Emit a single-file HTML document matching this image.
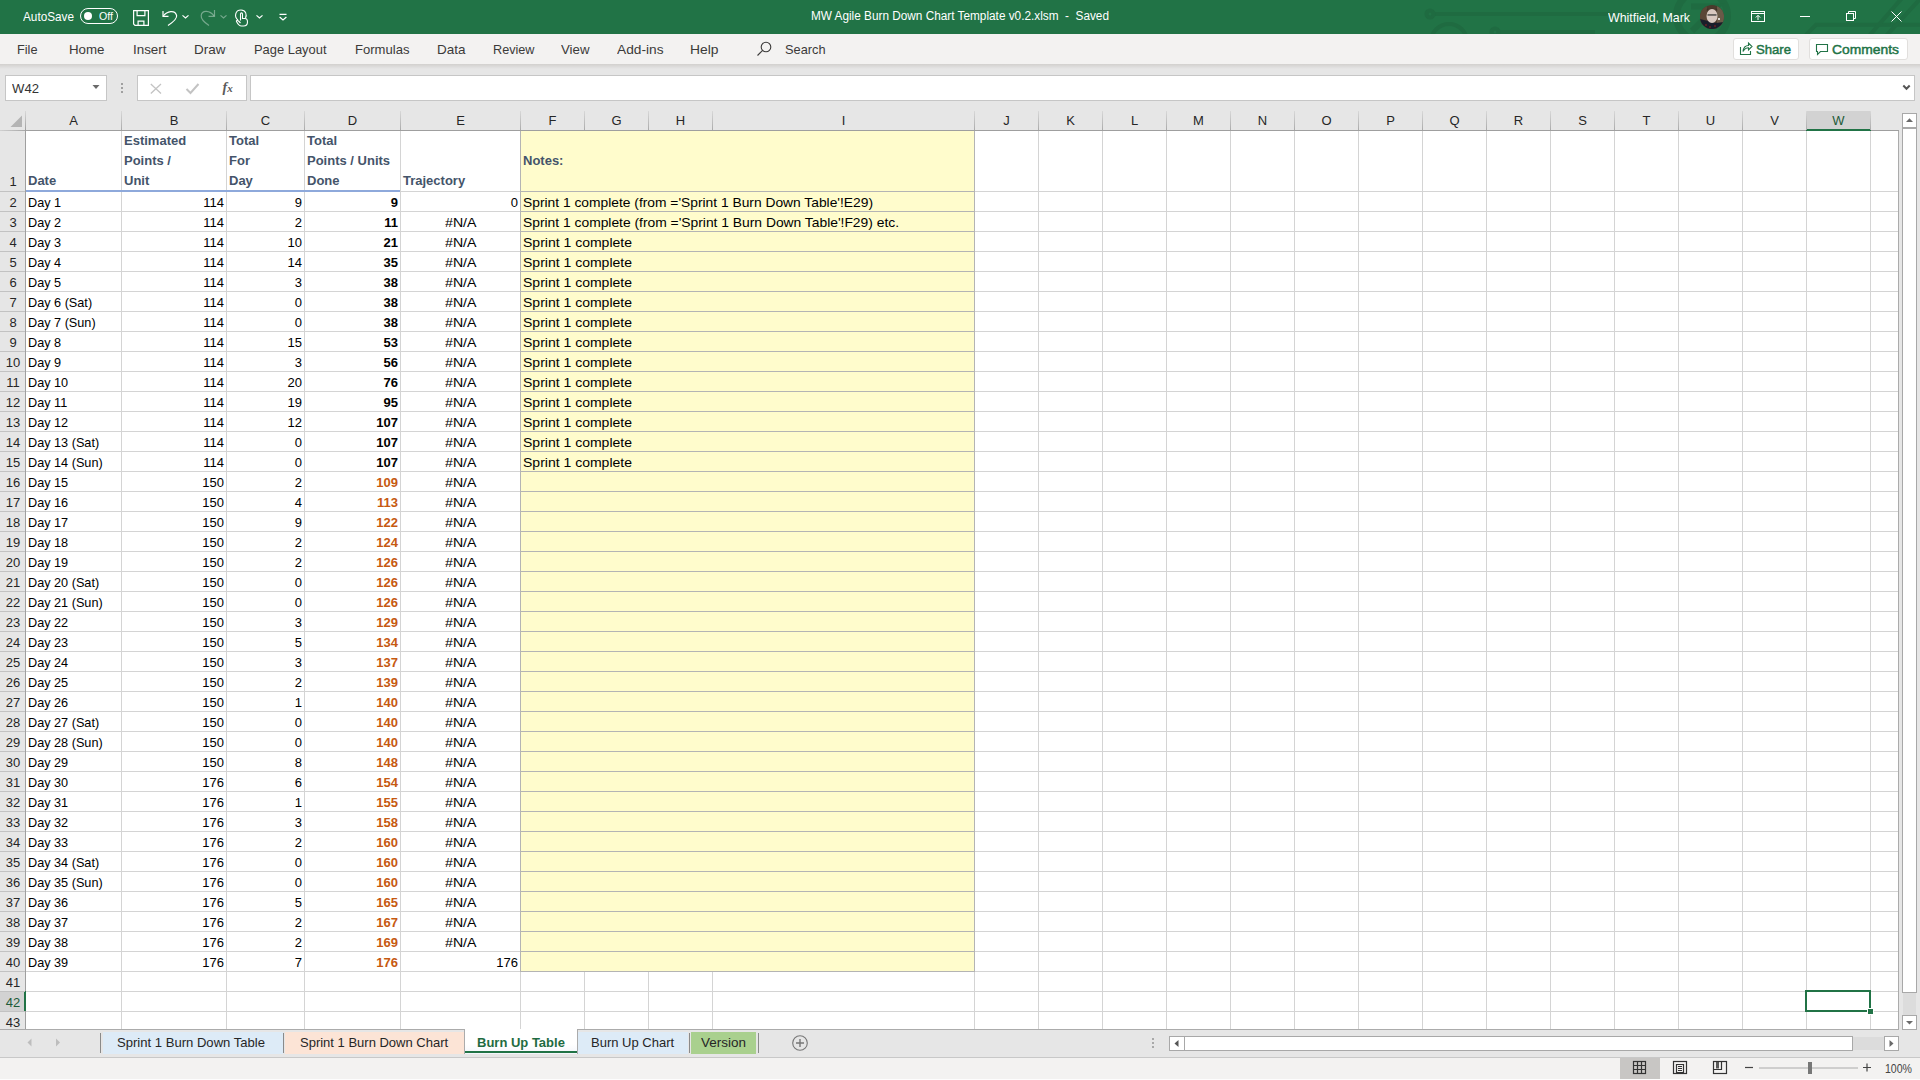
<!DOCTYPE html>
<html><head><meta charset="utf-8"><style>
html,body{margin:0;padding:0;width:1920px;height:1080px;overflow:hidden;background:#fff;position:relative}
body>div,body>svg{position:absolute}
.t{position:absolute;white-space:pre;font-family:'Liberation Sans', sans-serif}
</style></head><body>
<div style="left:0px;top:0px;width:1920px;height:34px;background:#217346"></div>
<svg style="position:absolute;left:1380px;top:0" width="540" height="34" viewBox="0 0 540 34">
<g stroke="#1f6b41" stroke-width="4" fill="none">
<line x1="53" y1="14" x2="235" y2="14"/><circle cx="50" cy="14" r="3.5"/>
<circle cx="69" cy="42" r="18"/>
<line x1="118" y1="32" x2="215" y2="32"/><circle cx="115" cy="32" r="3.5"/>
<circle cx="322" cy="16" r="25.5" stroke-width="7"/>
<path d="M311 6.5 L337 6.5 L312 31" stroke-width="6"/>
<path d="M424 37 L436 24.8 L545 24.8"/>
<path d="M489 36 L522 -2"/>
<path d="M506 36 L541 -2"/>
</g></svg>
<div style="left:80px;top:8px;width:38px;height:16px;border:1.2px solid #fff;border-radius:8px;box-sizing:border-box"></div>
<div style="left:84px;top:12px;width:8px;height:8px;background:#fff;border-radius:50%"></div>
<svg style="position:absolute;left:0;top:0" width="300" height="34" viewBox="0 0 300 34">
<g stroke="#fff" stroke-width="1.2" fill="none">
<path d="M133.6 10.6 H148.4 V25.4 H135 L133.6 24 Z"/>
<path d="M137.1 10.6 V15.6 H144.9 V10.6"/>
<path d="M138.1 25.4 V21.1 H143.9 V25.4"/>
<path d="M163 11 V16.4 H168.5"/>
<path d="M163.3 16 C167 11 175 9.5 176.6 15.5 C177.5 19 172.5 22.5 168 25.6"/>
<path d="M182.5 15.4 L185.5 18 L188.5 15.4"/>
<path d="M256.5 15.4 L259.5 18 L262.5 15.4"/>
<path d="M279.5 14.3 H286.5 M279.6 17 L283 20 L286.4 17"/>
</g>
<g stroke="#fff" stroke-opacity="0.38" stroke-width="1.2" fill="none">
<path d="M214.5 10 V16.4 H208.5"/>
<path d="M214 15.8 C210 10.5 202 9.5 201.2 15.5 C200.8 19 204.5 22.5 209 25.6"/>
<path d="M220.5 15.4 L223.5 18 L226.5 15.4"/>
</g>
<g stroke="#fff" stroke-width="1.1" fill="none">
<path d="M238 20 C234 17 235 10 241 10 C246 10 247 15 245.5 18"/>
<path d="M240.5 20.5 V14 C240.5 12.5 242.5 12.5 242.5 14 V18.5 H245 C247 18.5 247.5 20 247.5 22 C247.5 24.5 246 26 243.5 26 H241.5 C239.5 26 237.5 23.5 236.5 21.5 C236 20.5 237.5 20 238.5 21 L240.5 23"/>
</g>
</svg>
<svg style="position:absolute;left:1700px;top:5px" width="24" height="24" viewBox="0 0 24 24">
<defs><clipPath id="av"><circle cx="12" cy="12" r="12"/></clipPath></defs>
<g clip-path="url(#av)">
<rect width="24" height="24" fill="#4a3a2c"/>
<rect x="0" y="0" width="7" height="24" fill="#5b4636"/>
<rect x="17" y="0" width="7" height="24" fill="#6a5a48"/>
<path d="M0 14 L8 16 L16 18 L24 17 V24 H0 Z" fill="#1a1e2a"/>
<ellipse cx="12" cy="11" rx="5.5" ry="7" fill="#d8c8c0"/>
<path d="M6.5 6 C7 2 17 2 17.5 6 L17 4 C15 3 9 3 7 4 Z" fill="#2a2220"/>
<rect x="7.5" y="9.3" width="9" height="1.3" fill="#3b3b3b"/>
<circle cx="6" cy="20" r="0.7" fill="#c02020"/><circle cx="10" cy="22" r="0.7" fill="#c02020"/><circle cx="15" cy="21" r="0.7" fill="#c02020"/>
<circle cx="19" cy="14" r="1" fill="#fff"/>
</g></svg>
<svg style="position:absolute;left:1740px;top:0" width="180" height="34" viewBox="0 0 180 34">
<g stroke="#fff" stroke-width="1" fill="none">
<rect x="11.5" y="11.5" width="13" height="10"/>
<line x1="11.5" y1="13.5" x2="24.5" y2="13.5"/>
<path d="M18 20 V15.5 M15.8 17.5 L18 15.3 L20.2 17.5"/>
<line x1="60" y1="16.5" x2="70" y2="16.5"/>
<rect x="106.5" y="13.5" width="7" height="7"/>
<path d="M108.5 13.5 V11.5 H115.5 V18.5 H113.5"/>
<path d="M151.5 11.5 L161.5 21.5 M161.5 11.5 L151.5 21.5"/>
</g></svg>
<div style="left:0px;top:34px;width:1920px;height:30px;background:#f3f2f1"></div>
<div style="left:0px;top:64px;width:1920px;height:47px;background:#e6e6e6"></div>
<div style="left:0px;top:64px;width:1920px;height:5px;background:linear-gradient(#d2d0ce,#e6e6e6)"></div>
<svg style="position:absolute;left:750px;top:38px" width="26" height="22" viewBox="0 0 26 22">
<g stroke="#3b3a39" stroke-width="1.1" fill="none"><circle cx="16" cy="9" r="4.8"/><line x1="12.6" y1="12.4" x2="7.5" y2="17.5"/></g></svg>
<div style="left:1733px;top:38px;width:66px;height:22px;background:#fff;border:1px solid #e1dfdd;border-radius:3px;box-sizing:border-box"></div>
<div style="left:1809px;top:38px;width:99px;height:22px;background:#fff;border:1px solid #e1dfdd;border-radius:3px;box-sizing:border-box"></div>
<svg style="position:absolute;left:1735px;top:38px" width="180" height="22" viewBox="0 0 180 22">
<g stroke="#217346" stroke-width="1.1" fill="none">
<path d="M5.5 9 V16.5 H15.5 V13"/>
<path d="M8 13.5 C8.5 9.5 10.5 7.5 13.5 7.5 V5 L17 8.5 L13.5 12 V9.8 C11 9.8 9.5 11 8 13.5 Z"/>
<path d="M81.5 6.5 H92.5 V13.5 H85.5 L82.5 16.5 V13.5 H81.5 Z"/>
</g></svg>
<div style="left:5px;top:75px;width:102px;height:26px;background:#fff;border:1px solid #c6c6c6;box-sizing:border-box"></div>
<div style="left:137px;top:75px;width:110px;height:26px;background:#fff;border:1px solid #c6c6c6;box-sizing:border-box"></div>
<svg style="position:absolute;left:0;top:68px" width="260" height="36" viewBox="0 0 260 36">
<path d="M92.5 17 H99.5 L96 21 Z" fill="#6a6a6a"/>
<g fill="#a0a0a0"><rect x="121" y="15" width="2" height="2"/><rect x="121" y="19" width="2" height="2"/><rect x="121" y="23" width="2" height="2"/></g>
<g stroke="#c3c3c3" stroke-width="1.3" fill="none">
<path d="M150.8 16 L161 25.5 M161 16 L150.8 25.5"/>
<path d="M186.5 21 L190.5 25 L198.5 16" stroke-width="2"/>
</g>
</svg>
<div style="position:absolute;left:222.5px;top:80px;font:italic bold 14px 'Liberation Serif',serif;color:#5a5a5a">f<span style="font-size:11px">x</span></div>
<div style="left:250px;top:75px;width:1665px;height:26px;background:#fff;border:1px solid #c6c6c6;box-sizing:border-box"></div>
<svg style="position:absolute;left:1898px;top:80px" width="16" height="16" viewBox="0 0 16 16">
<path d="M5.3 5.5 L8.5 8.8 L11.7 5.5" stroke="#555" stroke-width="2" fill="none"/></svg>
<div style="left:0px;top:111px;width:1900px;height:20px;background:#e6e6e6"></div>
<div style="left:0px;top:130px;width:1899px;height:1px;background:linear-gradient(90deg,#d0d0d0,#9f9f9f 30px)"></div>
<svg style="position:absolute;left:0;top:111px" width="26" height="20" viewBox="0 0 26 20">
<path d="M10.5 16 H22 V4.5 Z" fill="#b4b4b4"/></svg>
<div style="left:1806px;top:111px;width:65px;height:20px;background:#d2d2d2"></div>
<div style="left:1806px;top:129px;width:65px;height:2px;background:#217346"></div>
<div style="left:1870px;top:111px;width:1px;height:18px;background:#acacac"></div>
<div style="left:121px;top:111px;width:1px;height:19px;background:linear-gradient(#d8d8d8,#ababab)"></div>
<div style="left:226px;top:111px;width:1px;height:19px;background:linear-gradient(#d8d8d8,#ababab)"></div>
<div style="left:304px;top:111px;width:1px;height:19px;background:linear-gradient(#d8d8d8,#ababab)"></div>
<div style="left:400px;top:111px;width:1px;height:19px;background:linear-gradient(#d8d8d8,#ababab)"></div>
<div style="left:520px;top:111px;width:1px;height:19px;background:linear-gradient(#d8d8d8,#ababab)"></div>
<div style="left:584px;top:111px;width:1px;height:19px;background:linear-gradient(#d8d8d8,#ababab)"></div>
<div style="left:648px;top:111px;width:1px;height:19px;background:linear-gradient(#d8d8d8,#ababab)"></div>
<div style="left:712px;top:111px;width:1px;height:19px;background:linear-gradient(#d8d8d8,#ababab)"></div>
<div style="left:974px;top:111px;width:1px;height:19px;background:linear-gradient(#d8d8d8,#ababab)"></div>
<div style="left:1038px;top:111px;width:1px;height:19px;background:linear-gradient(#d8d8d8,#ababab)"></div>
<div style="left:1102px;top:111px;width:1px;height:19px;background:linear-gradient(#d8d8d8,#ababab)"></div>
<div style="left:1166px;top:111px;width:1px;height:19px;background:linear-gradient(#d8d8d8,#ababab)"></div>
<div style="left:1230px;top:111px;width:1px;height:19px;background:linear-gradient(#d8d8d8,#ababab)"></div>
<div style="left:1294px;top:111px;width:1px;height:19px;background:linear-gradient(#d8d8d8,#ababab)"></div>
<div style="left:1358px;top:111px;width:1px;height:19px;background:linear-gradient(#d8d8d8,#ababab)"></div>
<div style="left:1422px;top:111px;width:1px;height:19px;background:linear-gradient(#d8d8d8,#ababab)"></div>
<div style="left:1486px;top:111px;width:1px;height:19px;background:linear-gradient(#d8d8d8,#ababab)"></div>
<div style="left:1550px;top:111px;width:1px;height:19px;background:linear-gradient(#d8d8d8,#ababab)"></div>
<div style="left:1614px;top:111px;width:1px;height:19px;background:linear-gradient(#d8d8d8,#ababab)"></div>
<div style="left:1678px;top:111px;width:1px;height:19px;background:linear-gradient(#d8d8d8,#ababab)"></div>
<div style="left:1742px;top:111px;width:1px;height:19px;background:linear-gradient(#d8d8d8,#ababab)"></div>
<div style="left:1806px;top:111px;width:1px;height:19px;background:linear-gradient(#d8d8d8,#ababab)"></div>
<div style="left:1870px;top:111px;width:1px;height:19px;background:linear-gradient(#d8d8d8,#ababab)"></div>
<div style="left:0px;top:131px;width:26px;height:898px;background:#e6e6e6"></div>
<div style="left:25px;top:111px;width:1px;height:918px;background:linear-gradient(#d8d8d8,#9f9f9f 19px)"></div>
<div style="left:0px;top:991px;width:25px;height:20px;background:#d2d2d2"></div>
<div style="left:24px;top:991px;width:2px;height:20px;background:#217346"></div>
<div style="left:0px;top:191px;width:25px;height:1px;background:#c2c2c2"></div>
<div style="left:0px;top:211px;width:25px;height:1px;background:#c2c2c2"></div>
<div style="left:0px;top:231px;width:25px;height:1px;background:#c2c2c2"></div>
<div style="left:0px;top:251px;width:25px;height:1px;background:#c2c2c2"></div>
<div style="left:0px;top:271px;width:25px;height:1px;background:#c2c2c2"></div>
<div style="left:0px;top:291px;width:25px;height:1px;background:#c2c2c2"></div>
<div style="left:0px;top:311px;width:25px;height:1px;background:#c2c2c2"></div>
<div style="left:0px;top:331px;width:25px;height:1px;background:#c2c2c2"></div>
<div style="left:0px;top:351px;width:25px;height:1px;background:#c2c2c2"></div>
<div style="left:0px;top:371px;width:25px;height:1px;background:#c2c2c2"></div>
<div style="left:0px;top:391px;width:25px;height:1px;background:#c2c2c2"></div>
<div style="left:0px;top:411px;width:25px;height:1px;background:#c2c2c2"></div>
<div style="left:0px;top:431px;width:25px;height:1px;background:#c2c2c2"></div>
<div style="left:0px;top:451px;width:25px;height:1px;background:#c2c2c2"></div>
<div style="left:0px;top:471px;width:25px;height:1px;background:#c2c2c2"></div>
<div style="left:0px;top:491px;width:25px;height:1px;background:#c2c2c2"></div>
<div style="left:0px;top:511px;width:25px;height:1px;background:#c2c2c2"></div>
<div style="left:0px;top:531px;width:25px;height:1px;background:#c2c2c2"></div>
<div style="left:0px;top:551px;width:25px;height:1px;background:#c2c2c2"></div>
<div style="left:0px;top:571px;width:25px;height:1px;background:#c2c2c2"></div>
<div style="left:0px;top:591px;width:25px;height:1px;background:#c2c2c2"></div>
<div style="left:0px;top:611px;width:25px;height:1px;background:#c2c2c2"></div>
<div style="left:0px;top:631px;width:25px;height:1px;background:#c2c2c2"></div>
<div style="left:0px;top:651px;width:25px;height:1px;background:#c2c2c2"></div>
<div style="left:0px;top:671px;width:25px;height:1px;background:#c2c2c2"></div>
<div style="left:0px;top:691px;width:25px;height:1px;background:#c2c2c2"></div>
<div style="left:0px;top:711px;width:25px;height:1px;background:#c2c2c2"></div>
<div style="left:0px;top:731px;width:25px;height:1px;background:#c2c2c2"></div>
<div style="left:0px;top:751px;width:25px;height:1px;background:#c2c2c2"></div>
<div style="left:0px;top:771px;width:25px;height:1px;background:#c2c2c2"></div>
<div style="left:0px;top:791px;width:25px;height:1px;background:#c2c2c2"></div>
<div style="left:0px;top:811px;width:25px;height:1px;background:#c2c2c2"></div>
<div style="left:0px;top:831px;width:25px;height:1px;background:#c2c2c2"></div>
<div style="left:0px;top:851px;width:25px;height:1px;background:#c2c2c2"></div>
<div style="left:0px;top:871px;width:25px;height:1px;background:#c2c2c2"></div>
<div style="left:0px;top:891px;width:25px;height:1px;background:#c2c2c2"></div>
<div style="left:0px;top:911px;width:25px;height:1px;background:#c2c2c2"></div>
<div style="left:0px;top:931px;width:25px;height:1px;background:#c2c2c2"></div>
<div style="left:0px;top:951px;width:25px;height:1px;background:#c2c2c2"></div>
<div style="left:0px;top:971px;width:25px;height:1px;background:#c2c2c2"></div>
<div style="left:0px;top:991px;width:25px;height:1px;background:#c2c2c2"></div>
<div style="left:0px;top:1011px;width:25px;height:1px;background:#c2c2c2"></div>
<div style="left:0px;top:1031px;width:25px;height:1px;background:#c2c2c2"></div>
<div style="left:26px;top:131px;width:1873px;height:898px;background:#fff"></div>
<div style="left:121px;top:131px;width:1px;height:898px;background:#d4d4d4"></div>
<div style="left:226px;top:131px;width:1px;height:898px;background:#d4d4d4"></div>
<div style="left:304px;top:131px;width:1px;height:898px;background:#d4d4d4"></div>
<div style="left:400px;top:131px;width:1px;height:898px;background:#d4d4d4"></div>
<div style="left:520px;top:131px;width:1px;height:898px;background:#d4d4d4"></div>
<div style="left:584px;top:131px;width:1px;height:898px;background:#d4d4d4"></div>
<div style="left:648px;top:131px;width:1px;height:898px;background:#d4d4d4"></div>
<div style="left:712px;top:131px;width:1px;height:898px;background:#d4d4d4"></div>
<div style="left:974px;top:131px;width:1px;height:898px;background:#d4d4d4"></div>
<div style="left:1038px;top:131px;width:1px;height:898px;background:#d4d4d4"></div>
<div style="left:1102px;top:131px;width:1px;height:898px;background:#d4d4d4"></div>
<div style="left:1166px;top:131px;width:1px;height:898px;background:#d4d4d4"></div>
<div style="left:1230px;top:131px;width:1px;height:898px;background:#d4d4d4"></div>
<div style="left:1294px;top:131px;width:1px;height:898px;background:#d4d4d4"></div>
<div style="left:1358px;top:131px;width:1px;height:898px;background:#d4d4d4"></div>
<div style="left:1422px;top:131px;width:1px;height:898px;background:#d4d4d4"></div>
<div style="left:1486px;top:131px;width:1px;height:898px;background:#d4d4d4"></div>
<div style="left:1550px;top:131px;width:1px;height:898px;background:#d4d4d4"></div>
<div style="left:1614px;top:131px;width:1px;height:898px;background:#d4d4d4"></div>
<div style="left:1678px;top:131px;width:1px;height:898px;background:#d4d4d4"></div>
<div style="left:1742px;top:131px;width:1px;height:898px;background:#d4d4d4"></div>
<div style="left:1806px;top:131px;width:1px;height:898px;background:#d4d4d4"></div>
<div style="left:1870px;top:131px;width:1px;height:898px;background:#d4d4d4"></div>
<div style="left:26px;top:191px;width:1873px;height:1px;background:#d4d4d4"></div>
<div style="left:26px;top:211px;width:1873px;height:1px;background:#d4d4d4"></div>
<div style="left:26px;top:231px;width:1873px;height:1px;background:#d4d4d4"></div>
<div style="left:26px;top:251px;width:1873px;height:1px;background:#d4d4d4"></div>
<div style="left:26px;top:271px;width:1873px;height:1px;background:#d4d4d4"></div>
<div style="left:26px;top:291px;width:1873px;height:1px;background:#d4d4d4"></div>
<div style="left:26px;top:311px;width:1873px;height:1px;background:#d4d4d4"></div>
<div style="left:26px;top:331px;width:1873px;height:1px;background:#d4d4d4"></div>
<div style="left:26px;top:351px;width:1873px;height:1px;background:#d4d4d4"></div>
<div style="left:26px;top:371px;width:1873px;height:1px;background:#d4d4d4"></div>
<div style="left:26px;top:391px;width:1873px;height:1px;background:#d4d4d4"></div>
<div style="left:26px;top:411px;width:1873px;height:1px;background:#d4d4d4"></div>
<div style="left:26px;top:431px;width:1873px;height:1px;background:#d4d4d4"></div>
<div style="left:26px;top:451px;width:1873px;height:1px;background:#d4d4d4"></div>
<div style="left:26px;top:471px;width:1873px;height:1px;background:#d4d4d4"></div>
<div style="left:26px;top:491px;width:1873px;height:1px;background:#d4d4d4"></div>
<div style="left:26px;top:511px;width:1873px;height:1px;background:#d4d4d4"></div>
<div style="left:26px;top:531px;width:1873px;height:1px;background:#d4d4d4"></div>
<div style="left:26px;top:551px;width:1873px;height:1px;background:#d4d4d4"></div>
<div style="left:26px;top:571px;width:1873px;height:1px;background:#d4d4d4"></div>
<div style="left:26px;top:591px;width:1873px;height:1px;background:#d4d4d4"></div>
<div style="left:26px;top:611px;width:1873px;height:1px;background:#d4d4d4"></div>
<div style="left:26px;top:631px;width:1873px;height:1px;background:#d4d4d4"></div>
<div style="left:26px;top:651px;width:1873px;height:1px;background:#d4d4d4"></div>
<div style="left:26px;top:671px;width:1873px;height:1px;background:#d4d4d4"></div>
<div style="left:26px;top:691px;width:1873px;height:1px;background:#d4d4d4"></div>
<div style="left:26px;top:711px;width:1873px;height:1px;background:#d4d4d4"></div>
<div style="left:26px;top:731px;width:1873px;height:1px;background:#d4d4d4"></div>
<div style="left:26px;top:751px;width:1873px;height:1px;background:#d4d4d4"></div>
<div style="left:26px;top:771px;width:1873px;height:1px;background:#d4d4d4"></div>
<div style="left:26px;top:791px;width:1873px;height:1px;background:#d4d4d4"></div>
<div style="left:26px;top:811px;width:1873px;height:1px;background:#d4d4d4"></div>
<div style="left:26px;top:831px;width:1873px;height:1px;background:#d4d4d4"></div>
<div style="left:26px;top:851px;width:1873px;height:1px;background:#d4d4d4"></div>
<div style="left:26px;top:871px;width:1873px;height:1px;background:#d4d4d4"></div>
<div style="left:26px;top:891px;width:1873px;height:1px;background:#d4d4d4"></div>
<div style="left:26px;top:911px;width:1873px;height:1px;background:#d4d4d4"></div>
<div style="left:26px;top:931px;width:1873px;height:1px;background:#d4d4d4"></div>
<div style="left:26px;top:951px;width:1873px;height:1px;background:#d4d4d4"></div>
<div style="left:26px;top:971px;width:1873px;height:1px;background:#d4d4d4"></div>
<div style="left:26px;top:991px;width:1873px;height:1px;background:#d4d4d4"></div>
<div style="left:26px;top:1011px;width:1873px;height:1px;background:#d4d4d4"></div>
<div style="left:26px;top:190px;width:374px;height:2px;background:#8ea9db"></div>
<div style="left:520px;top:131px;width:455px;height:841px;background:#fffccc;border-left:1px solid #b4b4b4;border-right:1px solid #b4b4b4;border-bottom:1px solid #b4b4b4;box-sizing:border-box"></div>
<div style="left:520px;top:191px;width:455px;height:1px;background:#b4b4b4"></div>
<div style="left:520px;top:211px;width:455px;height:1px;background:#b4b4b4"></div>
<div style="left:520px;top:231px;width:455px;height:1px;background:#b4b4b4"></div>
<div style="left:520px;top:251px;width:455px;height:1px;background:#b4b4b4"></div>
<div style="left:520px;top:271px;width:455px;height:1px;background:#b4b4b4"></div>
<div style="left:520px;top:291px;width:455px;height:1px;background:#b4b4b4"></div>
<div style="left:520px;top:311px;width:455px;height:1px;background:#b4b4b4"></div>
<div style="left:520px;top:331px;width:455px;height:1px;background:#b4b4b4"></div>
<div style="left:520px;top:351px;width:455px;height:1px;background:#b4b4b4"></div>
<div style="left:520px;top:371px;width:455px;height:1px;background:#b4b4b4"></div>
<div style="left:520px;top:391px;width:455px;height:1px;background:#b4b4b4"></div>
<div style="left:520px;top:411px;width:455px;height:1px;background:#b4b4b4"></div>
<div style="left:520px;top:431px;width:455px;height:1px;background:#b4b4b4"></div>
<div style="left:520px;top:451px;width:455px;height:1px;background:#b4b4b4"></div>
<div style="left:520px;top:471px;width:455px;height:1px;background:#b4b4b4"></div>
<div style="left:520px;top:491px;width:455px;height:1px;background:#b4b4b4"></div>
<div style="left:520px;top:511px;width:455px;height:1px;background:#b4b4b4"></div>
<div style="left:520px;top:531px;width:455px;height:1px;background:#b4b4b4"></div>
<div style="left:520px;top:551px;width:455px;height:1px;background:#b4b4b4"></div>
<div style="left:520px;top:571px;width:455px;height:1px;background:#b4b4b4"></div>
<div style="left:520px;top:591px;width:455px;height:1px;background:#b4b4b4"></div>
<div style="left:520px;top:611px;width:455px;height:1px;background:#b4b4b4"></div>
<div style="left:520px;top:631px;width:455px;height:1px;background:#b4b4b4"></div>
<div style="left:520px;top:651px;width:455px;height:1px;background:#b4b4b4"></div>
<div style="left:520px;top:671px;width:455px;height:1px;background:#b4b4b4"></div>
<div style="left:520px;top:691px;width:455px;height:1px;background:#b4b4b4"></div>
<div style="left:520px;top:711px;width:455px;height:1px;background:#b4b4b4"></div>
<div style="left:520px;top:731px;width:455px;height:1px;background:#b4b4b4"></div>
<div style="left:520px;top:751px;width:455px;height:1px;background:#b4b4b4"></div>
<div style="left:520px;top:771px;width:455px;height:1px;background:#b4b4b4"></div>
<div style="left:520px;top:791px;width:455px;height:1px;background:#b4b4b4"></div>
<div style="left:520px;top:811px;width:455px;height:1px;background:#b4b4b4"></div>
<div style="left:520px;top:831px;width:455px;height:1px;background:#b4b4b4"></div>
<div style="left:520px;top:851px;width:455px;height:1px;background:#b4b4b4"></div>
<div style="left:520px;top:871px;width:455px;height:1px;background:#b4b4b4"></div>
<div style="left:520px;top:891px;width:455px;height:1px;background:#b4b4b4"></div>
<div style="left:520px;top:911px;width:455px;height:1px;background:#b4b4b4"></div>
<div style="left:520px;top:931px;width:455px;height:1px;background:#b4b4b4"></div>
<div style="left:520px;top:951px;width:455px;height:1px;background:#b4b4b4"></div>
<div style="left:1805px;top:990px;width:66px;height:22px;border:2px solid #217346;box-sizing:border-box"></div>
<div style="left:1867px;top:1008px;width:5px;height:5px;background:#217346;border:1px solid #fff"></div>
<div style="left:1899px;top:111px;width:21px;height:919px;background:#e6e6e6"></div>
<div style="left:1898px;top:131px;width:1px;height:899px;background:#ababab"></div>
<div style="left:1902px;top:113px;width:15px;height:15px;background:#fff;border:1px solid #a8a8a8;box-sizing:border-box"></div>
<div style="left:1902px;top:128px;width:15px;height:865px;background:#fff;border:1px solid #a8a8a8;box-sizing:border-box"></div>
<div style="left:1903px;top:993px;width:13px;height:22px;background:#dcdcdc"></div>
<div style="left:1902px;top:1015px;width:15px;height:15px;background:#fff;border:1px solid #a8a8a8;box-sizing:border-box"></div>
<svg style="position:absolute;left:1902px;top:113px" width="15" height="917" viewBox="0 0 15 917">
<path d="M4 9 L7.5 5.3 L11 9 Z" fill="#6a6a6a"/><path d="M4 908 L7.5 911.5 L11 908 Z" fill="#6a6a6a"/></svg>
<div style="left:0px;top:1030px;width:1920px;height:28px;background:#e6e6e6"></div>
<div style="left:0px;top:1029px;width:1899px;height:1px;background:#ababab"></div>
<div style="left:0px;top:1057px;width:1920px;height:1px;background:#c8c8c8"></div>
<svg style="position:absolute;left:0;top:1030px" width="100" height="28" viewBox="0 0 100 28">
<path d="M27 8.5 L31 12.5 L27 16.5 Z" fill="#bdbdbd" transform="translate(29,0)"/>
<path d="M31.5 8.5 L27.5 12.5 L31.5 16.5 Z" fill="#bdbdbd"/></svg>
<div style="left:100px;top:1033px;width:1px;height:20px;background:#8a8a8a"></div>
<div style="left:103px;top:1032px;width:180px;height:22px;background:#ddebf7"></div>
<div style="left:283px;top:1033px;width:1px;height:20px;background:#8a8a8a"></div>
<div style="left:285px;top:1032px;width:179px;height:22px;background:#fce4d6"></div>
<div style="left:464px;top:1029px;width:114px;height:25px;background:linear-gradient(#fff 60%,#f3f6fb);border-left:1px solid #ababab;border-right:1px solid #ababab;box-sizing:border-box"></div>
<div style="left:465px;top:1051px;width:112px;height:2px;background:#217346"></div>
<div style="left:578px;top:1032px;width:110px;height:22px;background:#ddebf7"></div>
<div style="left:689px;top:1033px;width:1px;height:20px;background:#8a8a8a"></div>
<div style="left:691px;top:1032px;width:65px;height:22px;background:#a9d08e"></div>
<div style="left:758px;top:1033px;width:1px;height:20px;background:#8a8a8a"></div>
<svg style="position:absolute;left:790px;top:1034px" width="20" height="20" viewBox="0 0 20 20">
<circle cx="10" cy="9" r="7.3" stroke="#777" stroke-width="1.1" fill="none"/><path d="M10 5 V13 M6 9 H14" stroke="#777" stroke-width="1.4"/></svg>
<svg style="position:absolute;left:1148px;top:1030px" width="10" height="28" viewBox="0 0 10 28">
<g fill="#a8a8a8"><rect x="4" y="8" width="2" height="2"/><rect x="4" y="12" width="2" height="2"/><rect x="4" y="16" width="2" height="2"/></g></svg>
<div style="left:1169px;top:1036px;width:16px;height:15px;background:#fff;border:1px solid #a8a8a8;box-sizing:border-box"></div>
<div style="left:1184px;top:1036px;width:669px;height:15px;background:#fff;border:1px solid #a8a8a8;box-sizing:border-box"></div>
<div style="left:1853px;top:1037px;width:31px;height:13px;background:#dcdcdc"></div>
<div style="left:1884px;top:1036px;width:15px;height:15px;background:#fff;border:1px solid #a8a8a8;box-sizing:border-box"></div>
<svg style="position:absolute;left:1169px;top:1036px" width="731" height="15" viewBox="0 0 731 15">
<path d="M9.5 4 L5.5 7.5 L9.5 11 Z" fill="#555"/><path d="M720.5 4 L724.5 7.5 L720.5 11 Z" fill="#6a6a6a"/></svg>
<div style="left:0px;top:1058px;width:1920px;height:22px;background:#f3f2f1"></div>
<div style="left:0px;top:1079px;width:1920px;height:1px;background:#fdfdfd"></div>
<div style="left:1620px;top:1058px;width:40px;height:21px;background:#c8c6c4"></div>
<svg style="position:absolute;left:1620px;top:1058px" width="300" height="22" viewBox="0 0 300 22">
<g stroke="#333" stroke-width="1.2" fill="none">
<rect x="13.5" y="3.5" width="12" height="12"/><path d="M17.5 3.5 V15.5 M21.5 3.5 V15.5 M13.5 7.5 H25.5 M13.5 11.5 H25.5"/>
<rect x="53.5" y="3.5" width="13" height="12"/><path d="M56.5 6.5 H63.5 V14.5 H56.5 Z M58 8.5 H62 M58 10.5 H62 M58 12.5 H62"/>
<rect x="93.5" y="3.5" width="13" height="12"/><path d="M96.8 3.5 V10.5 M98.2 3.5 V10.5 M101.5 3.5 V11.5 H93.5"/>
</g>
<path d="M125 9.5 H133" stroke="#444" stroke-width="1.2"/>
<path d="M139 10 H238" stroke="#aaa" stroke-width="1"/>
<rect x="188" y="4" width="4" height="12" fill="#777"/>
<path d="M243 9.5 H251 M247 5.5 V13.5" stroke="#444" stroke-width="1.2"/>
</svg>
<div class="t" style="left:23.00px;top:9px;font-size:13px;line-height:16px;color:#fff;font-weight:normal;transform:scaleX(0.9047);transform-origin:0 0;">AutoSave</div>
<div class="t" style="left:98.50px;top:10px;font-size:11px;line-height:13px;color:#fff;font-weight:normal;transform:scaleX(0.9666);transform-origin:0 0;">Off</div>
<div class="t" style="left:811.00px;top:9px;font-size:12.5px;line-height:15px;color:#fff;font-weight:normal;transform:scaleX(0.9434);transform-origin:0 0;">MW Agile Burn Down Chart Template v0.2.xlsm  -  Saved</div>
<div class="t" style="left:1608.00px;top:10px;font-size:13px;line-height:16px;color:#fff;font-weight:normal;transform:scaleX(0.9538);transform-origin:0 0;">Whitfield, Mark</div>
<div class="t" style="left:17.00px;top:42px;font-size:13px;line-height:16px;color:#3b3a39;font-weight:normal;transform:scaleX(0.9784);transform-origin:0 0;">File</div>
<div class="t" style="left:69.00px;top:42px;font-size:13px;line-height:16px;color:#3b3a39;font-weight:normal;transform:scaleX(1.0234);transform-origin:0 0;">Home</div>
<div class="t" style="left:133.00px;top:42px;font-size:13px;line-height:16px;color:#3b3a39;font-weight:normal;transform:scaleX(1.0303);transform-origin:0 0;">Insert</div>
<div class="t" style="left:194.00px;top:42px;font-size:13px;line-height:16px;color:#3b3a39;font-weight:normal;transform:scaleX(1.0381);transform-origin:0 0;">Draw</div>
<div class="t" style="left:254.00px;top:42px;font-size:13px;line-height:16px;color:#3b3a39;font-weight:normal;transform:scaleX(0.9929);transform-origin:0 0;">Page Layout</div>
<div class="t" style="left:355.00px;top:42px;font-size:13px;line-height:16px;color:#3b3a39;font-weight:normal;transform:scaleX(1.0058);transform-origin:0 0;">Formulas</div>
<div class="t" style="left:437.00px;top:42px;font-size:13px;line-height:16px;color:#3b3a39;font-weight:normal;transform:scaleX(1.0375);transform-origin:0 0;">Data</div>
<div class="t" style="left:493.00px;top:42px;font-size:13px;line-height:16px;color:#3b3a39;font-weight:normal;transform:scaleX(0.9736);transform-origin:0 0;">Review</div>
<div class="t" style="left:561.00px;top:42px;font-size:13px;line-height:16px;color:#3b3a39;font-weight:normal;transform:scaleX(1.0196);transform-origin:0 0;">View</div>
<div class="t" style="left:617.00px;top:42px;font-size:13px;line-height:16px;color:#3b3a39;font-weight:normal;transform:scaleX(1.0549);transform-origin:0 0;">Add-ins</div>
<div class="t" style="left:690.00px;top:42px;font-size:13px;line-height:16px;color:#3b3a39;font-weight:normal;transform:scaleX(1.0654);transform-origin:0 0;">Help</div>
<div class="t" style="left:785.00px;top:42px;font-size:13px;line-height:16px;color:#3b3a39;font-weight:normal;transform:scaleX(0.9829);transform-origin:0 0;">Search</div>
<div class="t" style="left:1756.00px;top:42px;font-size:13px;line-height:16px;color:#217346;font-weight:normal;transform:scaleX(1.0086);transform-origin:0 0;-webkit-text-stroke:0.45px #217346;">Share</div>
<div class="t" style="left:1832.00px;top:42px;font-size:13px;line-height:16px;color:#217346;font-weight:normal;transform:scaleX(1.0659);transform-origin:0 0;-webkit-text-stroke:0.45px #217346;">Comments</div>
<div class="t" style="left:12.00px;top:81px;font-size:13px;line-height:16px;color:#333;font-weight:normal;transform:scaleX(1.0099);transform-origin:0 0;">W42</div>
<div class="t" style="left:69.16px;top:113px;font-size:13px;line-height:16px;color:#262626;font-weight:normal;">A</div>
<div class="t" style="left:169.66px;top:113px;font-size:13px;line-height:16px;color:#262626;font-weight:normal;">B</div>
<div class="t" style="left:260.80px;top:113px;font-size:13px;line-height:16px;color:#262626;font-weight:normal;">C</div>
<div class="t" style="left:347.80px;top:113px;font-size:13px;line-height:16px;color:#262626;font-weight:normal;">D</div>
<div class="t" style="left:456.16px;top:113px;font-size:13px;line-height:16px;color:#262626;font-weight:normal;">E</div>
<div class="t" style="left:548.52px;top:113px;font-size:13px;line-height:16px;color:#262626;font-weight:normal;">F</div>
<div class="t" style="left:611.44px;top:113px;font-size:13px;line-height:16px;color:#262626;font-weight:normal;">G</div>
<div class="t" style="left:675.80px;top:113px;font-size:13px;line-height:16px;color:#262626;font-weight:normal;">H</div>
<div class="t" style="left:841.69px;top:113px;font-size:13px;line-height:16px;color:#262626;font-weight:normal;">I</div>
<div class="t" style="left:1003.25px;top:113px;font-size:13px;line-height:16px;color:#262626;font-weight:normal;">J</div>
<div class="t" style="left:1066.16px;top:113px;font-size:13px;line-height:16px;color:#262626;font-weight:normal;">K</div>
<div class="t" style="left:1130.88px;top:113px;font-size:13px;line-height:16px;color:#262626;font-weight:normal;">L</div>
<div class="t" style="left:1193.08px;top:113px;font-size:13px;line-height:16px;color:#262626;font-weight:normal;">M</div>
<div class="t" style="left:1257.80px;top:113px;font-size:13px;line-height:16px;color:#262626;font-weight:normal;">N</div>
<div class="t" style="left:1321.44px;top:113px;font-size:13px;line-height:16px;color:#262626;font-weight:normal;">O</div>
<div class="t" style="left:1386.16px;top:113px;font-size:13px;line-height:16px;color:#262626;font-weight:normal;">P</div>
<div class="t" style="left:1449.44px;top:113px;font-size:13px;line-height:16px;color:#262626;font-weight:normal;">Q</div>
<div class="t" style="left:1513.80px;top:113px;font-size:13px;line-height:16px;color:#262626;font-weight:normal;">R</div>
<div class="t" style="left:1578.16px;top:113px;font-size:13px;line-height:16px;color:#262626;font-weight:normal;">S</div>
<div class="t" style="left:1642.52px;top:113px;font-size:13px;line-height:16px;color:#262626;font-weight:normal;">T</div>
<div class="t" style="left:1705.80px;top:113px;font-size:13px;line-height:16px;color:#262626;font-weight:normal;">U</div>
<div class="t" style="left:1770.16px;top:113px;font-size:13px;line-height:16px;color:#262626;font-weight:normal;">V</div>
<div class="t" style="left:1832.36px;top:113px;font-size:13px;line-height:16px;color:#1e5b38;font-weight:normal;">W</div>
<div class="t" style="left:9.38px;top:174px;font-size:13px;line-height:16px;color:#262626;font-weight:normal;">1</div>
<div class="t" style="left:9.38px;top:195px;font-size:13px;line-height:16px;color:#262626;font-weight:normal;">2</div>
<div class="t" style="left:9.38px;top:215px;font-size:13px;line-height:16px;color:#262626;font-weight:normal;">3</div>
<div class="t" style="left:9.38px;top:235px;font-size:13px;line-height:16px;color:#262626;font-weight:normal;">4</div>
<div class="t" style="left:9.38px;top:255px;font-size:13px;line-height:16px;color:#262626;font-weight:normal;">5</div>
<div class="t" style="left:9.38px;top:275px;font-size:13px;line-height:16px;color:#262626;font-weight:normal;">6</div>
<div class="t" style="left:9.38px;top:295px;font-size:13px;line-height:16px;color:#262626;font-weight:normal;">7</div>
<div class="t" style="left:9.38px;top:315px;font-size:13px;line-height:16px;color:#262626;font-weight:normal;">8</div>
<div class="t" style="left:9.38px;top:335px;font-size:13px;line-height:16px;color:#262626;font-weight:normal;">9</div>
<div class="t" style="left:5.77px;top:355px;font-size:13px;line-height:16px;color:#262626;font-weight:normal;">10</div>
<div class="t" style="left:6.25px;top:375px;font-size:13px;line-height:16px;color:#262626;font-weight:normal;">11</div>
<div class="t" style="left:5.77px;top:395px;font-size:13px;line-height:16px;color:#262626;font-weight:normal;">12</div>
<div class="t" style="left:5.77px;top:415px;font-size:13px;line-height:16px;color:#262626;font-weight:normal;">13</div>
<div class="t" style="left:5.77px;top:435px;font-size:13px;line-height:16px;color:#262626;font-weight:normal;">14</div>
<div class="t" style="left:5.77px;top:455px;font-size:13px;line-height:16px;color:#262626;font-weight:normal;">15</div>
<div class="t" style="left:5.77px;top:475px;font-size:13px;line-height:16px;color:#262626;font-weight:normal;">16</div>
<div class="t" style="left:5.77px;top:495px;font-size:13px;line-height:16px;color:#262626;font-weight:normal;">17</div>
<div class="t" style="left:5.77px;top:515px;font-size:13px;line-height:16px;color:#262626;font-weight:normal;">18</div>
<div class="t" style="left:5.77px;top:535px;font-size:13px;line-height:16px;color:#262626;font-weight:normal;">19</div>
<div class="t" style="left:5.77px;top:555px;font-size:13px;line-height:16px;color:#262626;font-weight:normal;">20</div>
<div class="t" style="left:5.77px;top:575px;font-size:13px;line-height:16px;color:#262626;font-weight:normal;">21</div>
<div class="t" style="left:5.77px;top:595px;font-size:13px;line-height:16px;color:#262626;font-weight:normal;">22</div>
<div class="t" style="left:5.77px;top:615px;font-size:13px;line-height:16px;color:#262626;font-weight:normal;">23</div>
<div class="t" style="left:5.77px;top:635px;font-size:13px;line-height:16px;color:#262626;font-weight:normal;">24</div>
<div class="t" style="left:5.77px;top:655px;font-size:13px;line-height:16px;color:#262626;font-weight:normal;">25</div>
<div class="t" style="left:5.77px;top:675px;font-size:13px;line-height:16px;color:#262626;font-weight:normal;">26</div>
<div class="t" style="left:5.77px;top:695px;font-size:13px;line-height:16px;color:#262626;font-weight:normal;">27</div>
<div class="t" style="left:5.77px;top:715px;font-size:13px;line-height:16px;color:#262626;font-weight:normal;">28</div>
<div class="t" style="left:5.77px;top:735px;font-size:13px;line-height:16px;color:#262626;font-weight:normal;">29</div>
<div class="t" style="left:5.77px;top:755px;font-size:13px;line-height:16px;color:#262626;font-weight:normal;">30</div>
<div class="t" style="left:5.77px;top:775px;font-size:13px;line-height:16px;color:#262626;font-weight:normal;">31</div>
<div class="t" style="left:5.77px;top:795px;font-size:13px;line-height:16px;color:#262626;font-weight:normal;">32</div>
<div class="t" style="left:5.77px;top:815px;font-size:13px;line-height:16px;color:#262626;font-weight:normal;">33</div>
<div class="t" style="left:5.77px;top:835px;font-size:13px;line-height:16px;color:#262626;font-weight:normal;">34</div>
<div class="t" style="left:5.77px;top:855px;font-size:13px;line-height:16px;color:#262626;font-weight:normal;">35</div>
<div class="t" style="left:5.77px;top:875px;font-size:13px;line-height:16px;color:#262626;font-weight:normal;">36</div>
<div class="t" style="left:5.77px;top:895px;font-size:13px;line-height:16px;color:#262626;font-weight:normal;">37</div>
<div class="t" style="left:5.77px;top:915px;font-size:13px;line-height:16px;color:#262626;font-weight:normal;">38</div>
<div class="t" style="left:5.77px;top:935px;font-size:13px;line-height:16px;color:#262626;font-weight:normal;">39</div>
<div class="t" style="left:5.77px;top:955px;font-size:13px;line-height:16px;color:#262626;font-weight:normal;">40</div>
<div class="t" style="left:5.77px;top:975px;font-size:13px;line-height:16px;color:#262626;font-weight:normal;">41</div>
<div class="t" style="left:5.77px;top:995px;font-size:13px;line-height:16px;color:#1e5b38;font-weight:normal;">42</div>
<div class="t" style="left:5.77px;top:1015px;font-size:13px;line-height:16px;color:#262626;font-weight:normal;">43</div>
<div class="t" style="left:28.00px;top:173px;font-size:13px;line-height:16px;color:#44546a;font-weight:bold;">Date</div>
<div class="t" style="left:124.00px;top:133px;font-size:13px;line-height:16px;color:#44546a;font-weight:bold;">Estimated</div>
<div class="t" style="left:124.00px;top:153px;font-size:13px;line-height:16px;color:#44546a;font-weight:bold;">Points /</div>
<div class="t" style="left:124.00px;top:173px;font-size:13px;line-height:16px;color:#44546a;font-weight:bold;">Unit</div>
<div class="t" style="left:229.00px;top:133px;font-size:13px;line-height:16px;color:#44546a;font-weight:bold;">Total</div>
<div class="t" style="left:229.00px;top:153px;font-size:13px;line-height:16px;color:#44546a;font-weight:bold;">For</div>
<div class="t" style="left:229.00px;top:173px;font-size:13px;line-height:16px;color:#44546a;font-weight:bold;">Day</div>
<div class="t" style="left:307.00px;top:133px;font-size:13px;line-height:16px;color:#44546a;font-weight:bold;">Total</div>
<div class="t" style="left:307.00px;top:153px;font-size:13px;line-height:16px;color:#44546a;font-weight:bold;">Points / Units</div>
<div class="t" style="left:307.00px;top:173px;font-size:13px;line-height:16px;color:#44546a;font-weight:bold;">Done</div>
<div class="t" style="left:403.00px;top:173px;font-size:13px;line-height:16px;color:#44546a;font-weight:bold;">Trajectory</div>
<div class="t" style="left:523.00px;top:153px;font-size:13px;line-height:16px;color:#44546a;font-weight:bold;">Notes:</div>
<div class="t" style="left:28.00px;top:195px;font-size:13px;line-height:16px;color:#000;font-weight:normal;transform:scaleX(0.9750);transform-origin:0 0;">Day 1</div>
<div class="t" style="left:203.27px;top:195px;font-size:13px;line-height:16px;color:#000;font-weight:normal;">114</div>
<div class="t" style="left:294.77px;top:195px;font-size:13px;line-height:16px;color:#000;font-weight:normal;">9</div>
<div class="t" style="left:390.77px;top:195px;font-size:13px;line-height:16px;color:#000;font-weight:bold;">9</div>
<div class="t" style="left:510.77px;top:195px;font-size:13px;line-height:16px;color:#000;font-weight:normal;">0</div>
<div class="t" style="left:523.00px;top:195px;font-size:13px;line-height:16px;color:#000;font-weight:normal;transform:scaleX(1.0621);transform-origin:0 0;">Sprint 1 complete (from ='Sprint 1 Burn Down Table'!E29)</div>
<div class="t" style="left:28.00px;top:215px;font-size:13px;line-height:16px;color:#000;font-weight:normal;transform:scaleX(0.9750);transform-origin:0 0;">Day 2</div>
<div class="t" style="left:203.27px;top:215px;font-size:13px;line-height:16px;color:#000;font-weight:normal;">114</div>
<div class="t" style="left:294.77px;top:215px;font-size:13px;line-height:16px;color:#000;font-weight:normal;">2</div>
<div class="t" style="left:384.25px;top:215px;font-size:13px;line-height:16px;color:#000;font-weight:bold;">11</div>
<div class="t" style="left:444.75px;top:215px;font-size:13px;line-height:16px;color:#000;font-weight:normal;transform:scaleX(1.0897);transform-origin:0 0;">#N/A</div>
<div class="t" style="left:523.00px;top:215px;font-size:13px;line-height:16px;color:#000;font-weight:normal;transform:scaleX(1.0641);transform-origin:0 0;">Sprint 1 complete (from ='Sprint 1 Burn Down Table'!F29) etc.</div>
<div class="t" style="left:28.00px;top:235px;font-size:13px;line-height:16px;color:#000;font-weight:normal;transform:scaleX(0.9750);transform-origin:0 0;">Day 3</div>
<div class="t" style="left:203.27px;top:235px;font-size:13px;line-height:16px;color:#000;font-weight:normal;">114</div>
<div class="t" style="left:287.53px;top:235px;font-size:13px;line-height:16px;color:#000;font-weight:normal;">10</div>
<div class="t" style="left:383.53px;top:235px;font-size:13px;line-height:16px;color:#000;font-weight:bold;">21</div>
<div class="t" style="left:444.75px;top:235px;font-size:13px;line-height:16px;color:#000;font-weight:normal;transform:scaleX(1.0897);transform-origin:0 0;">#N/A</div>
<div class="t" style="left:523.00px;top:235px;font-size:13px;line-height:16px;color:#000;font-weight:normal;transform:scaleX(1.0774);transform-origin:0 0;">Sprint 1 complete</div>
<div class="t" style="left:28.00px;top:255px;font-size:13px;line-height:16px;color:#000;font-weight:normal;transform:scaleX(0.9750);transform-origin:0 0;">Day 4</div>
<div class="t" style="left:203.27px;top:255px;font-size:13px;line-height:16px;color:#000;font-weight:normal;">114</div>
<div class="t" style="left:287.53px;top:255px;font-size:13px;line-height:16px;color:#000;font-weight:normal;">14</div>
<div class="t" style="left:383.53px;top:255px;font-size:13px;line-height:16px;color:#000;font-weight:bold;">35</div>
<div class="t" style="left:444.75px;top:255px;font-size:13px;line-height:16px;color:#000;font-weight:normal;transform:scaleX(1.0897);transform-origin:0 0;">#N/A</div>
<div class="t" style="left:523.00px;top:255px;font-size:13px;line-height:16px;color:#000;font-weight:normal;transform:scaleX(1.0774);transform-origin:0 0;">Sprint 1 complete</div>
<div class="t" style="left:28.00px;top:275px;font-size:13px;line-height:16px;color:#000;font-weight:normal;transform:scaleX(0.9750);transform-origin:0 0;">Day 5</div>
<div class="t" style="left:203.27px;top:275px;font-size:13px;line-height:16px;color:#000;font-weight:normal;">114</div>
<div class="t" style="left:294.77px;top:275px;font-size:13px;line-height:16px;color:#000;font-weight:normal;">3</div>
<div class="t" style="left:383.53px;top:275px;font-size:13px;line-height:16px;color:#000;font-weight:bold;">38</div>
<div class="t" style="left:444.75px;top:275px;font-size:13px;line-height:16px;color:#000;font-weight:normal;transform:scaleX(1.0897);transform-origin:0 0;">#N/A</div>
<div class="t" style="left:523.00px;top:275px;font-size:13px;line-height:16px;color:#000;font-weight:normal;transform:scaleX(1.0774);transform-origin:0 0;">Sprint 1 complete</div>
<div class="t" style="left:28.00px;top:295px;font-size:13px;line-height:16px;color:#000;font-weight:normal;transform:scaleX(0.9750);transform-origin:0 0;">Day 6 (Sat)</div>
<div class="t" style="left:203.27px;top:295px;font-size:13px;line-height:16px;color:#000;font-weight:normal;">114</div>
<div class="t" style="left:294.77px;top:295px;font-size:13px;line-height:16px;color:#000;font-weight:normal;">0</div>
<div class="t" style="left:383.53px;top:295px;font-size:13px;line-height:16px;color:#000;font-weight:bold;">38</div>
<div class="t" style="left:444.75px;top:295px;font-size:13px;line-height:16px;color:#000;font-weight:normal;transform:scaleX(1.0897);transform-origin:0 0;">#N/A</div>
<div class="t" style="left:523.00px;top:295px;font-size:13px;line-height:16px;color:#000;font-weight:normal;transform:scaleX(1.0774);transform-origin:0 0;">Sprint 1 complete</div>
<div class="t" style="left:28.00px;top:315px;font-size:13px;line-height:16px;color:#000;font-weight:normal;transform:scaleX(0.9750);transform-origin:0 0;">Day 7 (Sun)</div>
<div class="t" style="left:203.27px;top:315px;font-size:13px;line-height:16px;color:#000;font-weight:normal;">114</div>
<div class="t" style="left:294.77px;top:315px;font-size:13px;line-height:16px;color:#000;font-weight:normal;">0</div>
<div class="t" style="left:383.53px;top:315px;font-size:13px;line-height:16px;color:#000;font-weight:bold;">38</div>
<div class="t" style="left:444.75px;top:315px;font-size:13px;line-height:16px;color:#000;font-weight:normal;transform:scaleX(1.0897);transform-origin:0 0;">#N/A</div>
<div class="t" style="left:523.00px;top:315px;font-size:13px;line-height:16px;color:#000;font-weight:normal;transform:scaleX(1.0774);transform-origin:0 0;">Sprint 1 complete</div>
<div class="t" style="left:28.00px;top:335px;font-size:13px;line-height:16px;color:#000;font-weight:normal;transform:scaleX(0.9750);transform-origin:0 0;">Day 8</div>
<div class="t" style="left:203.27px;top:335px;font-size:13px;line-height:16px;color:#000;font-weight:normal;">114</div>
<div class="t" style="left:287.53px;top:335px;font-size:13px;line-height:16px;color:#000;font-weight:normal;">15</div>
<div class="t" style="left:383.53px;top:335px;font-size:13px;line-height:16px;color:#000;font-weight:bold;">53</div>
<div class="t" style="left:444.75px;top:335px;font-size:13px;line-height:16px;color:#000;font-weight:normal;transform:scaleX(1.0897);transform-origin:0 0;">#N/A</div>
<div class="t" style="left:523.00px;top:335px;font-size:13px;line-height:16px;color:#000;font-weight:normal;transform:scaleX(1.0774);transform-origin:0 0;">Sprint 1 complete</div>
<div class="t" style="left:28.00px;top:355px;font-size:13px;line-height:16px;color:#000;font-weight:normal;transform:scaleX(0.9750);transform-origin:0 0;">Day 9</div>
<div class="t" style="left:203.27px;top:355px;font-size:13px;line-height:16px;color:#000;font-weight:normal;">114</div>
<div class="t" style="left:294.77px;top:355px;font-size:13px;line-height:16px;color:#000;font-weight:normal;">3</div>
<div class="t" style="left:383.53px;top:355px;font-size:13px;line-height:16px;color:#000;font-weight:bold;">56</div>
<div class="t" style="left:444.75px;top:355px;font-size:13px;line-height:16px;color:#000;font-weight:normal;transform:scaleX(1.0897);transform-origin:0 0;">#N/A</div>
<div class="t" style="left:523.00px;top:355px;font-size:13px;line-height:16px;color:#000;font-weight:normal;transform:scaleX(1.0774);transform-origin:0 0;">Sprint 1 complete</div>
<div class="t" style="left:28.00px;top:375px;font-size:13px;line-height:16px;color:#000;font-weight:normal;transform:scaleX(0.9750);transform-origin:0 0;">Day 10</div>
<div class="t" style="left:203.27px;top:375px;font-size:13px;line-height:16px;color:#000;font-weight:normal;">114</div>
<div class="t" style="left:287.53px;top:375px;font-size:13px;line-height:16px;color:#000;font-weight:normal;">20</div>
<div class="t" style="left:383.53px;top:375px;font-size:13px;line-height:16px;color:#000;font-weight:bold;">76</div>
<div class="t" style="left:444.75px;top:375px;font-size:13px;line-height:16px;color:#000;font-weight:normal;transform:scaleX(1.0897);transform-origin:0 0;">#N/A</div>
<div class="t" style="left:523.00px;top:375px;font-size:13px;line-height:16px;color:#000;font-weight:normal;transform:scaleX(1.0774);transform-origin:0 0;">Sprint 1 complete</div>
<div class="t" style="left:28.00px;top:395px;font-size:13px;line-height:16px;color:#000;font-weight:normal;transform:scaleX(0.9750);transform-origin:0 0;">Day 11</div>
<div class="t" style="left:203.27px;top:395px;font-size:13px;line-height:16px;color:#000;font-weight:normal;">114</div>
<div class="t" style="left:287.53px;top:395px;font-size:13px;line-height:16px;color:#000;font-weight:normal;">19</div>
<div class="t" style="left:383.53px;top:395px;font-size:13px;line-height:16px;color:#000;font-weight:bold;">95</div>
<div class="t" style="left:444.75px;top:395px;font-size:13px;line-height:16px;color:#000;font-weight:normal;transform:scaleX(1.0897);transform-origin:0 0;">#N/A</div>
<div class="t" style="left:523.00px;top:395px;font-size:13px;line-height:16px;color:#000;font-weight:normal;transform:scaleX(1.0774);transform-origin:0 0;">Sprint 1 complete</div>
<div class="t" style="left:28.00px;top:415px;font-size:13px;line-height:16px;color:#000;font-weight:normal;transform:scaleX(0.9750);transform-origin:0 0;">Day 12</div>
<div class="t" style="left:203.27px;top:415px;font-size:13px;line-height:16px;color:#000;font-weight:normal;">114</div>
<div class="t" style="left:287.53px;top:415px;font-size:13px;line-height:16px;color:#000;font-weight:normal;">12</div>
<div class="t" style="left:376.30px;top:415px;font-size:13px;line-height:16px;color:#000;font-weight:bold;">107</div>
<div class="t" style="left:444.75px;top:415px;font-size:13px;line-height:16px;color:#000;font-weight:normal;transform:scaleX(1.0897);transform-origin:0 0;">#N/A</div>
<div class="t" style="left:523.00px;top:415px;font-size:13px;line-height:16px;color:#000;font-weight:normal;transform:scaleX(1.0774);transform-origin:0 0;">Sprint 1 complete</div>
<div class="t" style="left:28.00px;top:435px;font-size:13px;line-height:16px;color:#000;font-weight:normal;transform:scaleX(0.9750);transform-origin:0 0;">Day 13 (Sat)</div>
<div class="t" style="left:203.27px;top:435px;font-size:13px;line-height:16px;color:#000;font-weight:normal;">114</div>
<div class="t" style="left:294.77px;top:435px;font-size:13px;line-height:16px;color:#000;font-weight:normal;">0</div>
<div class="t" style="left:376.30px;top:435px;font-size:13px;line-height:16px;color:#000;font-weight:bold;">107</div>
<div class="t" style="left:444.75px;top:435px;font-size:13px;line-height:16px;color:#000;font-weight:normal;transform:scaleX(1.0897);transform-origin:0 0;">#N/A</div>
<div class="t" style="left:523.00px;top:435px;font-size:13px;line-height:16px;color:#000;font-weight:normal;transform:scaleX(1.0774);transform-origin:0 0;">Sprint 1 complete</div>
<div class="t" style="left:28.00px;top:455px;font-size:13px;line-height:16px;color:#000;font-weight:normal;transform:scaleX(0.9750);transform-origin:0 0;">Day 14 (Sun)</div>
<div class="t" style="left:203.27px;top:455px;font-size:13px;line-height:16px;color:#000;font-weight:normal;">114</div>
<div class="t" style="left:294.77px;top:455px;font-size:13px;line-height:16px;color:#000;font-weight:normal;">0</div>
<div class="t" style="left:376.30px;top:455px;font-size:13px;line-height:16px;color:#000;font-weight:bold;">107</div>
<div class="t" style="left:444.75px;top:455px;font-size:13px;line-height:16px;color:#000;font-weight:normal;transform:scaleX(1.0897);transform-origin:0 0;">#N/A</div>
<div class="t" style="left:523.00px;top:455px;font-size:13px;line-height:16px;color:#000;font-weight:normal;transform:scaleX(1.0774);transform-origin:0 0;">Sprint 1 complete</div>
<div class="t" style="left:28.00px;top:475px;font-size:13px;line-height:16px;color:#000;font-weight:normal;transform:scaleX(0.9750);transform-origin:0 0;">Day 15</div>
<div class="t" style="left:202.30px;top:475px;font-size:13px;line-height:16px;color:#000;font-weight:normal;">150</div>
<div class="t" style="left:294.77px;top:475px;font-size:13px;line-height:16px;color:#000;font-weight:normal;">2</div>
<div class="t" style="left:376.30px;top:475px;font-size:13px;line-height:16px;color:#c65911;font-weight:bold;">109</div>
<div class="t" style="left:444.75px;top:475px;font-size:13px;line-height:16px;color:#000;font-weight:normal;transform:scaleX(1.0897);transform-origin:0 0;">#N/A</div>
<div class="t" style="left:28.00px;top:495px;font-size:13px;line-height:16px;color:#000;font-weight:normal;transform:scaleX(0.9750);transform-origin:0 0;">Day 16</div>
<div class="t" style="left:202.30px;top:495px;font-size:13px;line-height:16px;color:#000;font-weight:normal;">150</div>
<div class="t" style="left:294.77px;top:495px;font-size:13px;line-height:16px;color:#000;font-weight:normal;">4</div>
<div class="t" style="left:377.02px;top:495px;font-size:13px;line-height:16px;color:#c65911;font-weight:bold;">113</div>
<div class="t" style="left:444.75px;top:495px;font-size:13px;line-height:16px;color:#000;font-weight:normal;transform:scaleX(1.0897);transform-origin:0 0;">#N/A</div>
<div class="t" style="left:28.00px;top:515px;font-size:13px;line-height:16px;color:#000;font-weight:normal;transform:scaleX(0.9750);transform-origin:0 0;">Day 17</div>
<div class="t" style="left:202.30px;top:515px;font-size:13px;line-height:16px;color:#000;font-weight:normal;">150</div>
<div class="t" style="left:294.77px;top:515px;font-size:13px;line-height:16px;color:#000;font-weight:normal;">9</div>
<div class="t" style="left:376.30px;top:515px;font-size:13px;line-height:16px;color:#c65911;font-weight:bold;">122</div>
<div class="t" style="left:444.75px;top:515px;font-size:13px;line-height:16px;color:#000;font-weight:normal;transform:scaleX(1.0897);transform-origin:0 0;">#N/A</div>
<div class="t" style="left:28.00px;top:535px;font-size:13px;line-height:16px;color:#000;font-weight:normal;transform:scaleX(0.9750);transform-origin:0 0;">Day 18</div>
<div class="t" style="left:202.30px;top:535px;font-size:13px;line-height:16px;color:#000;font-weight:normal;">150</div>
<div class="t" style="left:294.77px;top:535px;font-size:13px;line-height:16px;color:#000;font-weight:normal;">2</div>
<div class="t" style="left:376.30px;top:535px;font-size:13px;line-height:16px;color:#c65911;font-weight:bold;">124</div>
<div class="t" style="left:444.75px;top:535px;font-size:13px;line-height:16px;color:#000;font-weight:normal;transform:scaleX(1.0897);transform-origin:0 0;">#N/A</div>
<div class="t" style="left:28.00px;top:555px;font-size:13px;line-height:16px;color:#000;font-weight:normal;transform:scaleX(0.9750);transform-origin:0 0;">Day 19</div>
<div class="t" style="left:202.30px;top:555px;font-size:13px;line-height:16px;color:#000;font-weight:normal;">150</div>
<div class="t" style="left:294.77px;top:555px;font-size:13px;line-height:16px;color:#000;font-weight:normal;">2</div>
<div class="t" style="left:376.30px;top:555px;font-size:13px;line-height:16px;color:#c65911;font-weight:bold;">126</div>
<div class="t" style="left:444.75px;top:555px;font-size:13px;line-height:16px;color:#000;font-weight:normal;transform:scaleX(1.0897);transform-origin:0 0;">#N/A</div>
<div class="t" style="left:28.00px;top:575px;font-size:13px;line-height:16px;color:#000;font-weight:normal;transform:scaleX(0.9750);transform-origin:0 0;">Day 20 (Sat)</div>
<div class="t" style="left:202.30px;top:575px;font-size:13px;line-height:16px;color:#000;font-weight:normal;">150</div>
<div class="t" style="left:294.77px;top:575px;font-size:13px;line-height:16px;color:#000;font-weight:normal;">0</div>
<div class="t" style="left:376.30px;top:575px;font-size:13px;line-height:16px;color:#c65911;font-weight:bold;">126</div>
<div class="t" style="left:444.75px;top:575px;font-size:13px;line-height:16px;color:#000;font-weight:normal;transform:scaleX(1.0897);transform-origin:0 0;">#N/A</div>
<div class="t" style="left:28.00px;top:595px;font-size:13px;line-height:16px;color:#000;font-weight:normal;transform:scaleX(0.9750);transform-origin:0 0;">Day 21 (Sun)</div>
<div class="t" style="left:202.30px;top:595px;font-size:13px;line-height:16px;color:#000;font-weight:normal;">150</div>
<div class="t" style="left:294.77px;top:595px;font-size:13px;line-height:16px;color:#000;font-weight:normal;">0</div>
<div class="t" style="left:376.30px;top:595px;font-size:13px;line-height:16px;color:#c65911;font-weight:bold;">126</div>
<div class="t" style="left:444.75px;top:595px;font-size:13px;line-height:16px;color:#000;font-weight:normal;transform:scaleX(1.0897);transform-origin:0 0;">#N/A</div>
<div class="t" style="left:28.00px;top:615px;font-size:13px;line-height:16px;color:#000;font-weight:normal;transform:scaleX(0.9750);transform-origin:0 0;">Day 22</div>
<div class="t" style="left:202.30px;top:615px;font-size:13px;line-height:16px;color:#000;font-weight:normal;">150</div>
<div class="t" style="left:294.77px;top:615px;font-size:13px;line-height:16px;color:#000;font-weight:normal;">3</div>
<div class="t" style="left:376.30px;top:615px;font-size:13px;line-height:16px;color:#c65911;font-weight:bold;">129</div>
<div class="t" style="left:444.75px;top:615px;font-size:13px;line-height:16px;color:#000;font-weight:normal;transform:scaleX(1.0897);transform-origin:0 0;">#N/A</div>
<div class="t" style="left:28.00px;top:635px;font-size:13px;line-height:16px;color:#000;font-weight:normal;transform:scaleX(0.9750);transform-origin:0 0;">Day 23</div>
<div class="t" style="left:202.30px;top:635px;font-size:13px;line-height:16px;color:#000;font-weight:normal;">150</div>
<div class="t" style="left:294.77px;top:635px;font-size:13px;line-height:16px;color:#000;font-weight:normal;">5</div>
<div class="t" style="left:376.30px;top:635px;font-size:13px;line-height:16px;color:#c65911;font-weight:bold;">134</div>
<div class="t" style="left:444.75px;top:635px;font-size:13px;line-height:16px;color:#000;font-weight:normal;transform:scaleX(1.0897);transform-origin:0 0;">#N/A</div>
<div class="t" style="left:28.00px;top:655px;font-size:13px;line-height:16px;color:#000;font-weight:normal;transform:scaleX(0.9750);transform-origin:0 0;">Day 24</div>
<div class="t" style="left:202.30px;top:655px;font-size:13px;line-height:16px;color:#000;font-weight:normal;">150</div>
<div class="t" style="left:294.77px;top:655px;font-size:13px;line-height:16px;color:#000;font-weight:normal;">3</div>
<div class="t" style="left:376.30px;top:655px;font-size:13px;line-height:16px;color:#c65911;font-weight:bold;">137</div>
<div class="t" style="left:444.75px;top:655px;font-size:13px;line-height:16px;color:#000;font-weight:normal;transform:scaleX(1.0897);transform-origin:0 0;">#N/A</div>
<div class="t" style="left:28.00px;top:675px;font-size:13px;line-height:16px;color:#000;font-weight:normal;transform:scaleX(0.9750);transform-origin:0 0;">Day 25</div>
<div class="t" style="left:202.30px;top:675px;font-size:13px;line-height:16px;color:#000;font-weight:normal;">150</div>
<div class="t" style="left:294.77px;top:675px;font-size:13px;line-height:16px;color:#000;font-weight:normal;">2</div>
<div class="t" style="left:376.30px;top:675px;font-size:13px;line-height:16px;color:#c65911;font-weight:bold;">139</div>
<div class="t" style="left:444.75px;top:675px;font-size:13px;line-height:16px;color:#000;font-weight:normal;transform:scaleX(1.0897);transform-origin:0 0;">#N/A</div>
<div class="t" style="left:28.00px;top:695px;font-size:13px;line-height:16px;color:#000;font-weight:normal;transform:scaleX(0.9750);transform-origin:0 0;">Day 26</div>
<div class="t" style="left:202.30px;top:695px;font-size:13px;line-height:16px;color:#000;font-weight:normal;">150</div>
<div class="t" style="left:294.77px;top:695px;font-size:13px;line-height:16px;color:#000;font-weight:normal;">1</div>
<div class="t" style="left:376.30px;top:695px;font-size:13px;line-height:16px;color:#c65911;font-weight:bold;">140</div>
<div class="t" style="left:444.75px;top:695px;font-size:13px;line-height:16px;color:#000;font-weight:normal;transform:scaleX(1.0897);transform-origin:0 0;">#N/A</div>
<div class="t" style="left:28.00px;top:715px;font-size:13px;line-height:16px;color:#000;font-weight:normal;transform:scaleX(0.9750);transform-origin:0 0;">Day 27 (Sat)</div>
<div class="t" style="left:202.30px;top:715px;font-size:13px;line-height:16px;color:#000;font-weight:normal;">150</div>
<div class="t" style="left:294.77px;top:715px;font-size:13px;line-height:16px;color:#000;font-weight:normal;">0</div>
<div class="t" style="left:376.30px;top:715px;font-size:13px;line-height:16px;color:#c65911;font-weight:bold;">140</div>
<div class="t" style="left:444.75px;top:715px;font-size:13px;line-height:16px;color:#000;font-weight:normal;transform:scaleX(1.0897);transform-origin:0 0;">#N/A</div>
<div class="t" style="left:28.00px;top:735px;font-size:13px;line-height:16px;color:#000;font-weight:normal;transform:scaleX(0.9750);transform-origin:0 0;">Day 28 (Sun)</div>
<div class="t" style="left:202.30px;top:735px;font-size:13px;line-height:16px;color:#000;font-weight:normal;">150</div>
<div class="t" style="left:294.77px;top:735px;font-size:13px;line-height:16px;color:#000;font-weight:normal;">0</div>
<div class="t" style="left:376.30px;top:735px;font-size:13px;line-height:16px;color:#c65911;font-weight:bold;">140</div>
<div class="t" style="left:444.75px;top:735px;font-size:13px;line-height:16px;color:#000;font-weight:normal;transform:scaleX(1.0897);transform-origin:0 0;">#N/A</div>
<div class="t" style="left:28.00px;top:755px;font-size:13px;line-height:16px;color:#000;font-weight:normal;transform:scaleX(0.9750);transform-origin:0 0;">Day 29</div>
<div class="t" style="left:202.30px;top:755px;font-size:13px;line-height:16px;color:#000;font-weight:normal;">150</div>
<div class="t" style="left:294.77px;top:755px;font-size:13px;line-height:16px;color:#000;font-weight:normal;">8</div>
<div class="t" style="left:376.30px;top:755px;font-size:13px;line-height:16px;color:#c65911;font-weight:bold;">148</div>
<div class="t" style="left:444.75px;top:755px;font-size:13px;line-height:16px;color:#000;font-weight:normal;transform:scaleX(1.0897);transform-origin:0 0;">#N/A</div>
<div class="t" style="left:28.00px;top:775px;font-size:13px;line-height:16px;color:#000;font-weight:normal;transform:scaleX(0.9750);transform-origin:0 0;">Day 30</div>
<div class="t" style="left:202.30px;top:775px;font-size:13px;line-height:16px;color:#000;font-weight:normal;">176</div>
<div class="t" style="left:294.77px;top:775px;font-size:13px;line-height:16px;color:#000;font-weight:normal;">6</div>
<div class="t" style="left:376.30px;top:775px;font-size:13px;line-height:16px;color:#c65911;font-weight:bold;">154</div>
<div class="t" style="left:444.75px;top:775px;font-size:13px;line-height:16px;color:#000;font-weight:normal;transform:scaleX(1.0897);transform-origin:0 0;">#N/A</div>
<div class="t" style="left:28.00px;top:795px;font-size:13px;line-height:16px;color:#000;font-weight:normal;transform:scaleX(0.9750);transform-origin:0 0;">Day 31</div>
<div class="t" style="left:202.30px;top:795px;font-size:13px;line-height:16px;color:#000;font-weight:normal;">176</div>
<div class="t" style="left:294.77px;top:795px;font-size:13px;line-height:16px;color:#000;font-weight:normal;">1</div>
<div class="t" style="left:376.30px;top:795px;font-size:13px;line-height:16px;color:#c65911;font-weight:bold;">155</div>
<div class="t" style="left:444.75px;top:795px;font-size:13px;line-height:16px;color:#000;font-weight:normal;transform:scaleX(1.0897);transform-origin:0 0;">#N/A</div>
<div class="t" style="left:28.00px;top:815px;font-size:13px;line-height:16px;color:#000;font-weight:normal;transform:scaleX(0.9750);transform-origin:0 0;">Day 32</div>
<div class="t" style="left:202.30px;top:815px;font-size:13px;line-height:16px;color:#000;font-weight:normal;">176</div>
<div class="t" style="left:294.77px;top:815px;font-size:13px;line-height:16px;color:#000;font-weight:normal;">3</div>
<div class="t" style="left:376.30px;top:815px;font-size:13px;line-height:16px;color:#c65911;font-weight:bold;">158</div>
<div class="t" style="left:444.75px;top:815px;font-size:13px;line-height:16px;color:#000;font-weight:normal;transform:scaleX(1.0897);transform-origin:0 0;">#N/A</div>
<div class="t" style="left:28.00px;top:835px;font-size:13px;line-height:16px;color:#000;font-weight:normal;transform:scaleX(0.9750);transform-origin:0 0;">Day 33</div>
<div class="t" style="left:202.30px;top:835px;font-size:13px;line-height:16px;color:#000;font-weight:normal;">176</div>
<div class="t" style="left:294.77px;top:835px;font-size:13px;line-height:16px;color:#000;font-weight:normal;">2</div>
<div class="t" style="left:376.30px;top:835px;font-size:13px;line-height:16px;color:#c65911;font-weight:bold;">160</div>
<div class="t" style="left:444.75px;top:835px;font-size:13px;line-height:16px;color:#000;font-weight:normal;transform:scaleX(1.0897);transform-origin:0 0;">#N/A</div>
<div class="t" style="left:28.00px;top:855px;font-size:13px;line-height:16px;color:#000;font-weight:normal;transform:scaleX(0.9750);transform-origin:0 0;">Day 34 (Sat)</div>
<div class="t" style="left:202.30px;top:855px;font-size:13px;line-height:16px;color:#000;font-weight:normal;">176</div>
<div class="t" style="left:294.77px;top:855px;font-size:13px;line-height:16px;color:#000;font-weight:normal;">0</div>
<div class="t" style="left:376.30px;top:855px;font-size:13px;line-height:16px;color:#c65911;font-weight:bold;">160</div>
<div class="t" style="left:444.75px;top:855px;font-size:13px;line-height:16px;color:#000;font-weight:normal;transform:scaleX(1.0897);transform-origin:0 0;">#N/A</div>
<div class="t" style="left:28.00px;top:875px;font-size:13px;line-height:16px;color:#000;font-weight:normal;transform:scaleX(0.9750);transform-origin:0 0;">Day 35 (Sun)</div>
<div class="t" style="left:202.30px;top:875px;font-size:13px;line-height:16px;color:#000;font-weight:normal;">176</div>
<div class="t" style="left:294.77px;top:875px;font-size:13px;line-height:16px;color:#000;font-weight:normal;">0</div>
<div class="t" style="left:376.30px;top:875px;font-size:13px;line-height:16px;color:#c65911;font-weight:bold;">160</div>
<div class="t" style="left:444.75px;top:875px;font-size:13px;line-height:16px;color:#000;font-weight:normal;transform:scaleX(1.0897);transform-origin:0 0;">#N/A</div>
<div class="t" style="left:28.00px;top:895px;font-size:13px;line-height:16px;color:#000;font-weight:normal;transform:scaleX(0.9750);transform-origin:0 0;">Day 36</div>
<div class="t" style="left:202.30px;top:895px;font-size:13px;line-height:16px;color:#000;font-weight:normal;">176</div>
<div class="t" style="left:294.77px;top:895px;font-size:13px;line-height:16px;color:#000;font-weight:normal;">5</div>
<div class="t" style="left:376.30px;top:895px;font-size:13px;line-height:16px;color:#c65911;font-weight:bold;">165</div>
<div class="t" style="left:444.75px;top:895px;font-size:13px;line-height:16px;color:#000;font-weight:normal;transform:scaleX(1.0897);transform-origin:0 0;">#N/A</div>
<div class="t" style="left:28.00px;top:915px;font-size:13px;line-height:16px;color:#000;font-weight:normal;transform:scaleX(0.9750);transform-origin:0 0;">Day 37</div>
<div class="t" style="left:202.30px;top:915px;font-size:13px;line-height:16px;color:#000;font-weight:normal;">176</div>
<div class="t" style="left:294.77px;top:915px;font-size:13px;line-height:16px;color:#000;font-weight:normal;">2</div>
<div class="t" style="left:376.30px;top:915px;font-size:13px;line-height:16px;color:#c65911;font-weight:bold;">167</div>
<div class="t" style="left:444.75px;top:915px;font-size:13px;line-height:16px;color:#000;font-weight:normal;transform:scaleX(1.0897);transform-origin:0 0;">#N/A</div>
<div class="t" style="left:28.00px;top:935px;font-size:13px;line-height:16px;color:#000;font-weight:normal;transform:scaleX(0.9750);transform-origin:0 0;">Day 38</div>
<div class="t" style="left:202.30px;top:935px;font-size:13px;line-height:16px;color:#000;font-weight:normal;">176</div>
<div class="t" style="left:294.77px;top:935px;font-size:13px;line-height:16px;color:#000;font-weight:normal;">2</div>
<div class="t" style="left:376.30px;top:935px;font-size:13px;line-height:16px;color:#c65911;font-weight:bold;">169</div>
<div class="t" style="left:444.75px;top:935px;font-size:13px;line-height:16px;color:#000;font-weight:normal;transform:scaleX(1.0897);transform-origin:0 0;">#N/A</div>
<div class="t" style="left:28.00px;top:955px;font-size:13px;line-height:16px;color:#000;font-weight:normal;transform:scaleX(0.9750);transform-origin:0 0;">Day 39</div>
<div class="t" style="left:202.30px;top:955px;font-size:13px;line-height:16px;color:#000;font-weight:normal;">176</div>
<div class="t" style="left:294.77px;top:955px;font-size:13px;line-height:16px;color:#000;font-weight:normal;">7</div>
<div class="t" style="left:376.30px;top:955px;font-size:13px;line-height:16px;color:#c65911;font-weight:bold;">176</div>
<div class="t" style="left:496.30px;top:955px;font-size:13px;line-height:16px;color:#000;font-weight:normal;">176</div>
<div class="t" style="left:117.00px;top:1035px;font-size:13px;line-height:16px;color:#262626;font-weight:normal;transform:scaleX(1.0055);transform-origin:0 0;">Sprint 1 Burn Down Table</div>
<div class="t" style="left:300.00px;top:1035px;font-size:13px;line-height:16px;color:#262626;font-weight:normal;">Sprint 1 Burn Down Chart</div>
<div class="t" style="left:477.00px;top:1035px;font-size:13px;line-height:16px;color:#1e6b41;font-weight:bold;">Burn Up Table</div>
<div class="t" style="left:591.00px;top:1035px;font-size:13px;line-height:16px;color:#262626;font-weight:normal;">Burn Up Chart</div>
<div class="t" style="left:701.00px;top:1035px;font-size:13px;line-height:16px;color:#262626;font-weight:normal;transform:scaleX(1.0375);transform-origin:0 0;">Version</div>
<div class="t" style="left:1885.00px;top:1062px;font-size:12px;line-height:14px;color:#444;font-weight:normal;transform:scaleX(0.8794);transform-origin:0 0;">100%</div>
</body></html>
